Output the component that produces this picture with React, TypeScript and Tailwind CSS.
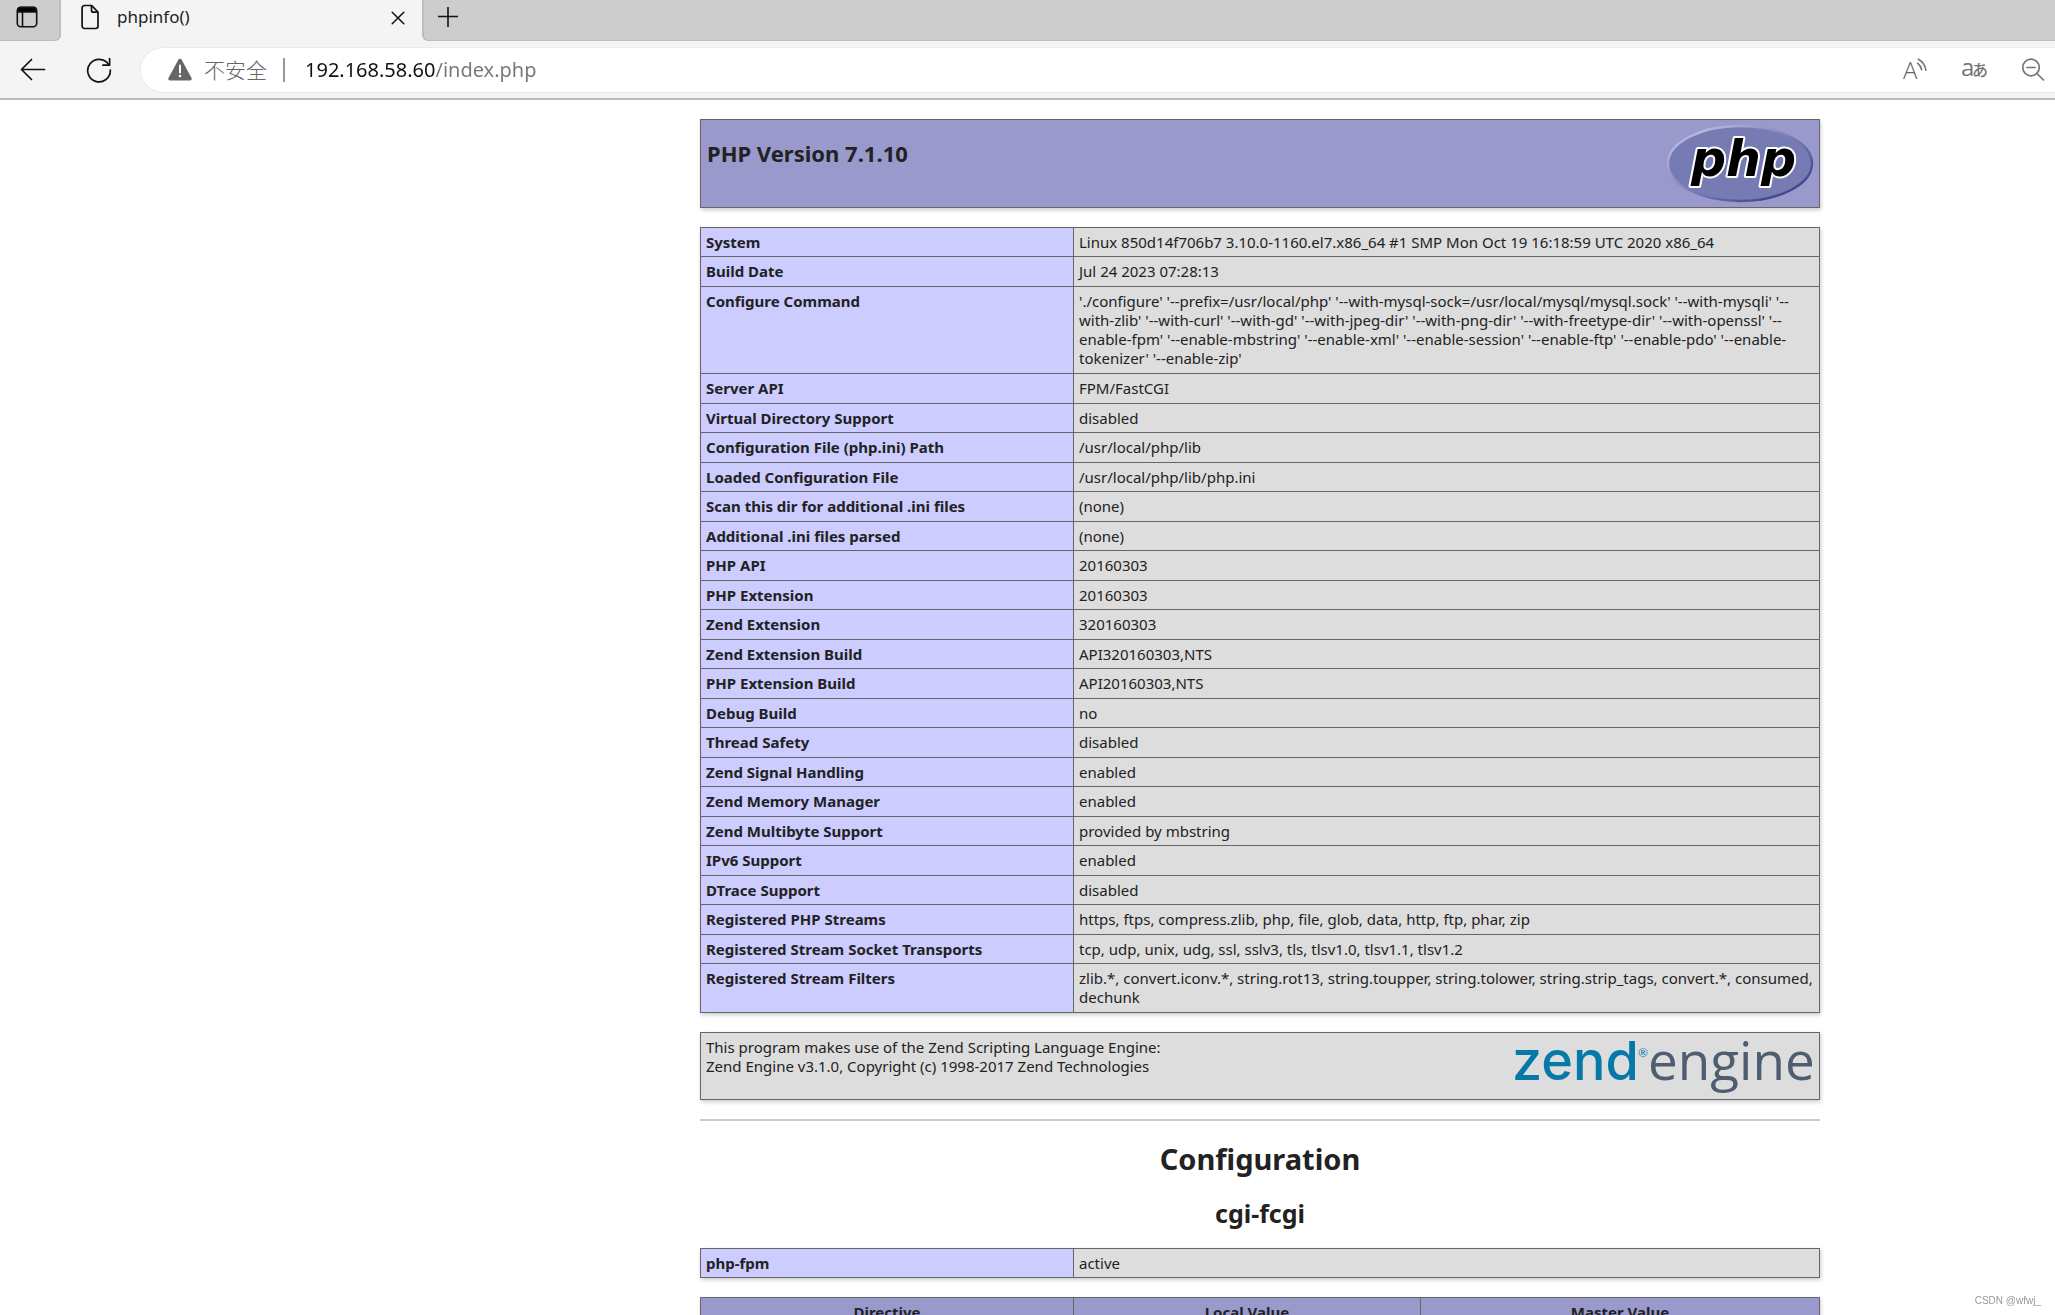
import React from "react";

type Row = [string, string];

const infoRows: Row[] = [
  ["System", "Linux 850d14f706b7 3.10.0-1160.el7.x86_64 #1 SMP Mon Oct 19 16:18:59 UTC 2020 x86_64"],
  ["Build Date", "Jul 24 2023 07:28:13"],
  [
    "Configure Command",
    "'./configure' '--prefix=/usr/local/php' '--with-mysql-sock=/usr/local/mysql/mysql.sock' '--with-mysqli' '--\nwith-zlib' '--with-curl' '--with-gd' '--with-jpeg-dir' '--with-png-dir' '--with-freetype-dir' '--with-openssl' '--\nenable-fpm' '--enable-mbstring' '--enable-xml' '--enable-session' '--enable-ftp' '--enable-pdo' '--enable-\ntokenizer' '--enable-zip'",
  ],
  ["Server API", "FPM/FastCGI"],
  ["Virtual Directory Support", "disabled"],
  ["Configuration File (php.ini) Path", "/usr/local/php/lib"],
  ["Loaded Configuration File", "/usr/local/php/lib/php.ini"],
  ["Scan this dir for additional .ini files", "(none)"],
  ["Additional .ini files parsed", "(none)"],
  ["PHP API", "20160303"],
  ["PHP Extension", "20160303"],
  ["Zend Extension", "320160303"],
  ["Zend Extension Build", "API320160303,NTS"],
  ["PHP Extension Build", "API20160303,NTS"],
  ["Debug Build", "no"],
  ["Thread Safety", "disabled"],
  ["Zend Signal Handling", "enabled"],
  ["Zend Memory Manager", "enabled"],
  ["Zend Multibyte Support", "provided by mbstring"],
  ["IPv6 Support", "enabled"],
  ["DTrace Support", "disabled"],
  ["Registered PHP Streams", "https, ftps, compress.zlib, php, file, glob, data, http, ftp, phar, zip"],
  ["Registered Stream Socket Transports", "tcp, udp, unix, udg, ssl, sslv3, tls, tlsv1.0, tlsv1.1, tlsv1.2"],
  [
    "Registered Stream Filters",
    "zlib.*, convert.iconv.*, string.rot13, string.toupper, string.tolower, string.strip_tags, convert.*, consumed,\ndechunk",
  ],
];

const PANEL = "border border-[#666] shadow-[1px_2px_4px_#ccc]";

function InfoTable({ rows }: { rows: Row[] }) {
  return (
    <table className={`w-full table-fixed border-collapse ${PANEL}`}>
      <tbody>
        {rows.map(([name, value]) => (
          <tr key={name} className="h-[29px] align-top even:h-[30px]">
            <th scope="row" className="w-1/3 border border-[#666] bg-[#ccccff] px-[5px] pt-[5px] pb-1 text-left font-bold">
              {name}
            </th>
            <td
              className={`border border-[#666] bg-[#dddddd] px-[5px] pt-[5px] whitespace-pre-line ${
                value.includes("\n") ? "pb-[5px]" : "pb-1"
              }`}
            >
              {value}
            </td>
          </tr>
        ))}
      </tbody>
    </table>
  );
}

function PhpLogo() {
  return (
    <svg className="overflow-visible" width="146" height="80" viewBox="0 0 146 80" role="img" aria-label="PHP logo">
      <defs>
        <linearGradient id="rim" x1="0" y1="0" x2="1" y2="1">
          <stop offset="0.15" stopColor="#b4b7dc" />
          <stop offset="0.5" stopColor="#7b7fb8" />
          <stop offset="0.85" stopColor="#43468c" />
        </linearGradient>
      </defs>
      <ellipse cx="73" cy="39.500" rx="72" ry="37.500" fill="#777bb3" stroke="url(#rim)" strokeWidth="2.400" />
      <text
        x="24"
        y="52"
        fontFamily="DejaVu Sans"
        fontSize="49"
        fontWeight="bold"
        fontStyle="italic"
        fill="#000"
        stroke="#fff"
        strokeWidth="4"
        strokeLinejoin="round"
        paintOrder="stroke"
      >
        php
      </text>
    </svg>
  );
}

function ZendLogo() {
  return (
    <svg className="overflow-visible" width="302" height="58" viewBox="0 0 302 58" role="img" aria-label="Zend Engine">
      <text x="0" y="42" fontFamily="Inter" fontSize="54" fontWeight="500" fill="#0679a9">
        zend
      </text>
      <text x="126" y="19" fontFamily="Lato" fontSize="12" fill="#0679a9">
        ®
      </text>
      <text x="136" y="42" fontFamily="Open Sans" fontSize="53" fill="#4f5d70">
        engine
      </text>
    </svg>
  );
}

function TabStrip() {
  return (
    <div className="flex h-[41px] bg-[#f4f4f4]">
      <div className="flex w-[61px] items-start rounded-br-md border-r-2 border-b border-[#bdbdbd] bg-[#cdcdcd] pt-1.5 pl-4">
        <button type="button" aria-label="Tab actions" className="block">
          <svg width="22" height="22" viewBox="0 0 22 22" fill="none" stroke="#111" strokeWidth="1.6">
            <rect x="1.3" y="1.3" width="19.4" height="19.4" rx="3.5" />
            <path d="M2 3.5a2 2 0 0 1 2-2h14a2 2 0 0 1 2 2V6H2z" fill="#000" />
            <path d="M6.5 6v14.5" />
          </svg>
        </button>
      </div>
      <div className="flex w-[361px] items-start pr-[17px] pl-5" role="tab" aria-selected="true">
        <svg className="mt-1" width="18" height="26" viewBox="0 0 18 26" fill="none" stroke="#111" strokeWidth="1.7" strokeLinejoin="round">
          <path d="M3.5 1.5h7.2l6.3 6.6v14a2.4 2.4 0 0 1-2.4 2.4H3.5A2.4 2.4 0 0 1 1.1 22V4a2.4 2.4 0 0 1 2.4-2.5z" />
          <path d="M10.5 1.7v4.5a2 2 0 0 0 2 2h4.3" />
        </svg>
        <span className="ml-[18px] flex-1 pt-1 text-[17px] leading-[26px] text-[#222]">phpinfo()</span>
        <button type="button" aria-label="Close tab" className="mt-[11px] block">
          <svg width="14" height="14" viewBox="0 0 14 14" stroke="#111" strokeWidth="1.5" strokeLinecap="round">
            <path d="M1.2 1.2l11.6 11.6M12.8 1.2L1.2 12.8" />
          </svg>
        </button>
      </div>
      <div className="flex flex-1 items-start rounded-bl-md border-b border-l-2 border-[#bdbdbd] bg-[#cdcdcd] pt-1.5 pl-[13px]">
        <button type="button" aria-label="New tab" className="block">
          <svg width="22" height="22" viewBox="0 0 22 22" stroke="#111" strokeWidth="1.6">
            <path d="M11 1v20M1 10.5h20" />
          </svg>
        </button>
      </div>
    </div>
  );
}

function Toolbar() {
  return (
    <div className="flex h-[59px] items-center border-b-2 border-[#bbb] bg-[#f4f4f4]">
      <button type="button" aria-label="Back" className="ml-5 block">
        <svg width="26" height="24" viewBox="0 0 26 24" fill="none" stroke="#111" strokeWidth="1.7" strokeLinecap="round" strokeLinejoin="round">
          <path d="M24.5 11.5H1.5M11.5 1.5L1.5 11.5l10 10" />
        </svg>
      </button>
      <button type="button" aria-label="Refresh" className="ml-10 block">
        <svg width="26" height="26" viewBox="0 0 26 26" fill="none" stroke="#111" strokeWidth="1.7" strokeLinecap="round" strokeLinejoin="round">
          <path d="M22.6 7.6A11.3 11.3 0 1 0 24.3 13" />
          <path d="M23.6 1.5v6.700h-6.700" />
        </svg>
      </button>
      <form className="ml-7 flex h-[46px] flex-1 items-center rounded-l-full border border-r-0 border-[#ebebeb] bg-white pr-2.5 pl-[27px]">
        <svg width="24" height="23" viewBox="0 0 24 23" aria-hidden="true">
          <path d="M12 .8c.8 0 1.400.4 1.800 1.100l9.700 18c.7 1.300-.2 2.600-1.700 2.600H2.200C.7 22.500-.2 21.200.5 19.900l9.700-18C10.600 1.200 11.200.8 12 .8z" fill="#666" />
          <path d="M12 7.5v7" stroke="#fff" strokeWidth="2" strokeLinecap="round" />
          <circle cx="12" cy="18" r="1.3" fill="#fff" />
        </svg>
        <label htmlFor="address" className="ml-3 text-[21px] leading-7 font-light text-[#666]">
          不安全
        </label>
        <span className="ml-4 h-6 w-0.5 bg-[#999]" />
        <input
          id="address"
          type="text"
          readOnly
          value="192.168.58.60/index.php"
          className="ml-5 flex-1 bg-[linear-gradient(90deg,#111_130px,#767676_130px)] bg-clip-text text-[20px] leading-7 text-transparent outline-none"
        />
        <button type="button" aria-label="Read aloud" className="block">
          <svg className="overflow-visible" width="26" height="26" viewBox="0 0 26 26" fill="none" stroke="#767676" strokeWidth="1.6" strokeLinecap="round">
            <text x="0" y="22" fontFamily="Open Sans" fontSize="24" fontWeight="300" fill="#666" strokeWidth="0">
              A
            </text>
            <path d="M14.5 6.2a11 11 0 0 1 4.2 6.6M15.3 2.3a15 15 0 0 1 7.7 11" />
          </svg>
        </button>
        <button type="button" aria-label="Translate" className="ml-8 block">
          <svg className="overflow-visible" width="28" height="26" viewBox="0 0 28 26" fill="#767676">
            <text x="0" y="19" fontFamily="Open Sans" fontSize="24">
              a
            </text>
            <text x="11" y="19" fontFamily="Noto Sans CJK JP" fontSize="16" fontWeight="500">
              あ
            </text>
          </svg>
        </button>
        <button type="button" aria-label="Zoom out" className="ml-8 block">
          <svg width="24" height="24" viewBox="0 0 24 24" fill="none" stroke="#767676" strokeWidth="1.7" strokeLinecap="round">
            <circle cx="10" cy="9.5" r="8.3" />
            <path d="M6 9.5h8M16 15.5l6.5 6.5" />
          </svg>
        </button>
      </form>
    </div>
  );
}

export default function App() {
  return (
    <div className="h-screen overflow-hidden bg-white font-['Noto_Sans','Noto_Sans_CJK_SC',sans-serif] text-[#222]">
      <header>
        <TabStrip />
        <Toolbar />
      </header>
      <main className="mr-[235px] ml-[700px] pt-[19px] text-[15px] leading-[19px]">
        <section className={`flex h-[89px] justify-between bg-[#9999cc] pt-1 pr-1.5 pl-1.5 ${PANEL}`}>
          <h1 className="pt-[15px] text-[22px] leading-7 font-bold">PHP Version 7.1.10</h1>
          <a href="http://www.php.net/">
            <PhpLogo />
          </a>
        </section>
        <div className="mt-[19px]">
          <InfoTable rows={infoRows} />
        </div>
        <section className={`mt-[19px] flex h-[68px] justify-between bg-[#dddddd] px-[5px] pt-[5px] ${PANEL}`}>
          <p>
            This program makes use of the Zend Scripting Language Engine:
            <br />
            Zend Engine v3.1.0, Copyright (c) 1998-2017 Zend Technologies
          </p>
          <a href="http://www.zend.com/">
            <ZendLogo />
          </a>
        </section>
        <hr className="mt-[19px] border-t-2 border-[#ccc]" />
        <h1 className="mt-[18px] text-center text-[29px] leading-10 font-bold">Configuration</h1>
        <h2 className="mt-[18px] text-center text-[25px] leading-8 font-bold">cgi-fcgi</h2>
        <div className="mt-[19px]">
          <InfoTable rows={[["php-fpm", "active"]]} />
        </div>
        <table className={`mt-[19px] w-full table-fixed border-collapse ${PANEL}`}>
          <thead>
            <tr className="bg-[#9999cc] text-center">
              <th className="w-1/3 border border-[#666] py-[5px]">Directive</th>
              <th className="w-[31%] border border-[#666] py-[5px]">Local Value</th>
              <th className="border border-[#666] py-[5px]">Master Value</th>
            </tr>
          </thead>
        </table>
      </main>
      <div className="fixed right-3.5 bottom-2 font-['Liberation_Sans',sans-serif] text-[10px] leading-3 text-[#999]">CSDN @wfwj_</div>
    </div>
  );
}
